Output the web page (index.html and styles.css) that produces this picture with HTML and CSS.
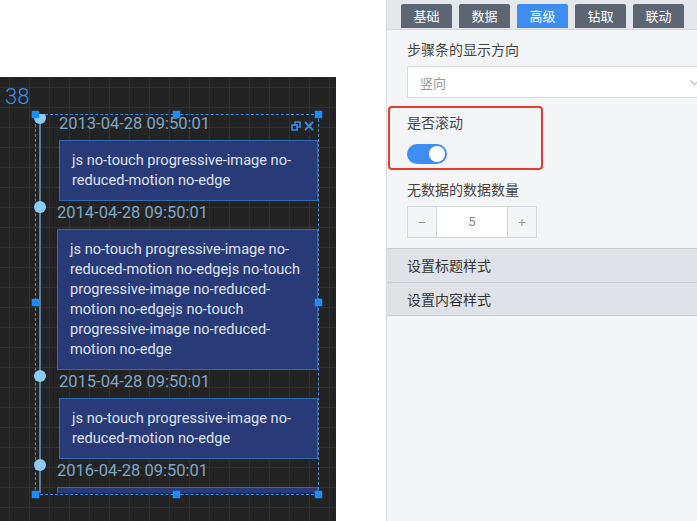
FILE: index.html
```html
<!DOCTYPE html>
<html lang="zh">
<head>
<meta charset="utf-8">
<link rel="stylesheet" href="styles.css">
</head>
<body>
<div class="page">
  <div class="stage">
    <div class="stage-top"></div>
    <div class="canvas">
      <div class="ruler-num">38</div>
      <div class="comp">
        <div class="comp-body">
          <div class="tl-line"></div>
          <div class="tl-item odd">
            <span class="tl-dot"></span>
            <div class="tl-title">2013-04-28 09:50:01</div>
            <div class="tl-box">js no-touch progressive-image no-reduced-motion no-edge</div>
          </div>
          <div class="tl-item">
            <span class="tl-dot"></span>
            <div class="tl-title">2014-04-28 09:50:01</div>
            <div class="tl-box">js no-touch progressive-image no-reduced-motion no-edgejs no-touch progressive-image no-reduced-motion no-edgejs no-touch progressive-image no-reduced-motion no-edge</div>
          </div>
          <div class="tl-item odd">
            <span class="tl-dot"></span>
            <div class="tl-title">2015-04-28 09:50:01</div>
            <div class="tl-box">js no-touch progressive-image no-reduced-motion no-edge</div>
          </div>
          <div class="tl-item">
            <span class="tl-dot"></span>
            <div class="tl-title">2016-04-28 09:50:01</div>
            <div class="tl-box">js no-touch progressive-image no-reduced-motion no-edge</div>
          </div>
        </div>
        <div class="comp-tools">
          <svg width="10" height="10" viewBox="0 0 10 10" fill="none" stroke="#3a8ee6" stroke-width="1.6">
            <rect x="1" y="4" width="5" height="5"/>
            <path d="M4 4V1h5v5H6"/>
          </svg>
          <svg width="10" height="10" viewBox="0 0 10 10" fill="none" stroke="#3a8ee6" stroke-width="1.8">
            <path d="M1 1L9 9M9 1L1 9"/>
          </svg>
        </div>
        <span class="h h-tl"></span><span class="h h-tc"></span><span class="h h-tr"></span>
        <span class="h h-ml"></span><span class="h h-mr"></span>
        <span class="h h-bl"></span><span class="h h-bc"></span><span class="h h-br"></span>
      </div>
    </div>
  </div>
  <div class="panel">
    <div class="tabs">
      <div class="tab">基础</div>
      <div class="tab">数据</div>
      <div class="tab active">高级</div>
      <div class="tab">钻取</div>
      <div class="tab">联动</div>
    </div>
    <div class="form">
      <div class="field">
        <div class="label">步骤条的显示方向</div>
        <div class="select"><span>竖向</span><span class="arrow"></span></div>
      </div>
      <div class="field highlight-wrap">
        <div class="label">是否滚动</div>
        <div class="switch"><span class="knob"></span></div>
        <div class="highlight"></div>
      </div>
      <div class="field last">
        <div class="label">无数据的数据数量</div>
        <div class="number">
          <span class="step">−</span>
          <span class="value">5</span>
          <span class="step">+</span>
        </div>
      </div>
    </div>
    <div class="collapse">设置标题样式</div>
    <div class="collapse">设置内容样式</div>
  </div>
</div>
</body>
</html>
```
FILE: styles.css
```css
* { box-sizing: border-box; }
html, body { margin: 0; padding: 0; }
body {
  width: 697px;
  height: 521px;
  overflow: hidden;
  background: #fff;
  font-family: "Noto Sans CJK SC", "Noto Sans", sans-serif;
}
.page {
  display: flex;
  width: 697px;
  height: 521px;
}
.stage {
  width: 386px;
  flex: none;
  display: flex;
  flex-direction: column;
  background: #fff;
}
.stage-top { height: 77px; flex: none; }
.canvas {
  position: relative;
  width: 336px;
  flex: 1;
  background-color: #232323;
  background-image:
    linear-gradient(#303030 1px, transparent 1px),
    linear-gradient(90deg, #303030 1px, transparent 1px);
  background-size: 20px 20px;
  background-position: 9px 10px;
}
.ruler-num {
  padding: 8px 0 0 5px;
  font-family: Roboto, sans-serif;
  font-weight: 300;
  font-size: 22px;
  line-height: 24px;
  color: #3a8ee6;
}
.comp {
  position: absolute;
  left: 35px;
  top: 37px;
  width: 284px;
  height: 381px;
  border: 1px dashed #3a8ee6;
}
.comp-body {
  position: relative;
  height: 100%;
  clip-path: inset(0 -12px 0 -12px);
}
.tl-line {
  position: absolute;
  left: 3px;
  top: 0;
  bottom: 0;
  width: 2px;
  background: #5d7d99;
}
.tl-item {
  position: relative;
  padding-left: 21px;
  margin-top: 2px;
}
.tl-item.odd { padding-left: 23px; }
.tl-line + .tl-item { margin-top: -1px; }
.tl-dot {
  position: absolute;
  left: -2px;
  top: -2px;
  width: 12px;
  height: 12px;
  border-radius: 50%;
  background: #8ccbf4;
}
.tl-title {
  font-family: Roboto, sans-serif;
  font-size: 16.5px;
  line-height: 20px;
  color: #7ea7c9;
  margin-bottom: 6px;
}
.tl-box {
  background: #293a78;
  border: 1px solid #2c6cb4;
  padding: 9px 11px 10px 12px;
  font-family: Roboto, sans-serif;
  font-size: 14.6px;
  line-height: 20px;
  color: #dde3ef;
}
.comp-tools {
  position: absolute;
  top: 6px;
  right: 4px;
  display: flex;
  gap: 3px;
}
.comp-tools svg { display: block; }
.h {
  position: absolute;
  width: 7px;
  height: 7px;
  background: #1e8cf5;
  box-shadow: 0 0 2px #1e8cf5;
}
.h-tl { left: -4px; top: -4px; }
.h-tc { left: 137px; top: -4px; }
.h-tr { right: -4px; top: -4px; }
.h-ml { left: -4px; top: 184px; }
.h-mr { right: -4px; top: 184px; }
.h-bl { left: -4px; bottom: -4px; }
.h-bc { left: 137px; bottom: -4px; }
.h-br { right: -4px; bottom: -4px; }

.panel {
  flex: none;
  width: 330px;
  background: #f4f5f7;
  border-left: 1px solid #d8dbe0;
  display: flex;
  flex-direction: column;
}
.tabs {
  height: 30px;
  background: #e4e7eb;
  border-bottom: 1px solid #d5d8dd;
  display: flex;
  align-items: flex-end;
  gap: 7px;
  padding-left: 14px;
  padding-bottom: 1px;
}
.tab {
  width: 51px;
  height: 24px;
  background: #5b6574;
  color: #fff;
  font-size: 13px;
  line-height: 24px;
  text-align: center;
  border-radius: 2px 2px 0 0;
}
.tab.active { background: #3d8ef0; }
.form {
  padding: 9px 0 0 20px;
}
.field { margin-bottom: 14px; }
.field.last { margin-bottom: 10px; }
.label {
  font-size: 14px;
  line-height: 20px;
  color: #444;
  margin-bottom: 7px;
}
.select {
  display: flex;
  align-items: center;
  justify-content: space-between;
  width: 298px;
  height: 32px;
  background: #fff;
  border: 1px solid #d9dce1;
  border-radius: 2px;
  padding: 0 8px 0 12px;
  font-size: 13px;
  color: #999;
}
.arrow {
  width: 7px;
  height: 7px;
  border-right: 1px solid #bbb;
  border-bottom: 1px solid #bbb;
  transform: rotate(45deg) translateY(-3px);
}
.highlight-wrap { position: relative; }
.switch {
  position: relative;
  width: 40px;
  height: 20px;
  margin-top: 12px;
  border-radius: 10px;
  background: #3d8ef0;
}
.knob {
  position: absolute;
  right: 2px;
  top: 2px;
  width: 16px;
  height: 16px;
  border-radius: 50%;
  background: #fff;
}
.highlight {
  position: absolute;
  left: -19px;
  top: -6px;
  width: 155px;
  height: 64px;
  border: 2px solid #e53a30;
  border-radius: 4px;
}
.field.last { padding-top: 1px; }
.number {
  display: flex;
  width: 130px;
  height: 32px;
  border: 1px solid #d4d7dc;
  background: #f4f5f7;
}
.step {
  width: 28px;
  flex: none;
  text-align: center;
  line-height: 30px;
  color: #999;
  font-size: 14px;
}
.value {
  flex: 1;
  background: #fff;
  border-left: 1px solid #d4d7dc;
  border-right: 1px solid #d4d7dc;
  text-align: center;
  line-height: 30px;
  color: #888;
  font-size: 13px;
  font-family: Roboto, sans-serif;
}
.collapse {
  height: 34px;
  background: #dfe3e8;
  border-top: 1px solid #c9cdd3;
  padding-left: 20px;
  font-size: 14px;
  line-height: 32px;
  color: #333;
}
.collapse + .collapse { height: 34px; border-bottom: 1px solid #c9cdd3; }
```
